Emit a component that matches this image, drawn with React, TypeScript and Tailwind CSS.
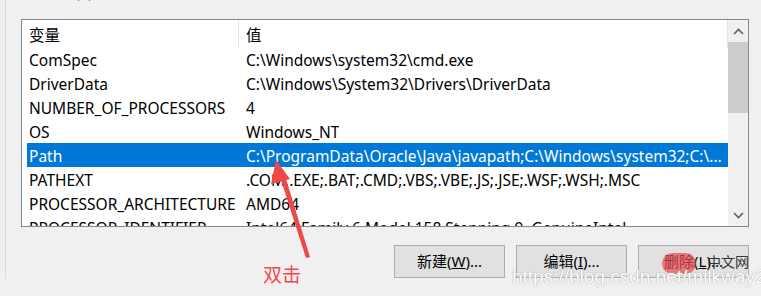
import React from "react";

const rows: [string, string][] = [
  ["ComSpec", "C:\\Windows\\system32\\cmd.exe"],
  ["DriverData", "C:\\Windows\\System32\\Drivers\\DriverData"],
  ["NUMBER_OF_PROCESSORS", "4"],
  ["OS", "Windows_NT"],
  ["Path", "C:\\ProgramData\\Oracle\\Java\\javapath;C:\\Windows\\system32;C:\\..."],
  ["PATHEXT", ".COM;.EXE;.BAT;.CMD;.VBS;.VBE;.JS;.JSE;.WSF;.WSH;.MSC"],
  ["PROCESSOR_ARCHITECTURE", "AMD64"],
  ["PROCESSOR_IDENTIFIER", "Intel64 Family 6 Model 158 Stepping 9, GenuineIntel"],
];

const font = "font-['Noto_Sans','Noto_Sans_CJK_SC',sans-serif]";

const Button: React.FC<{ label: string; hotkey: string }> = ({ label, hotkey }) => (
  <button className="w-[111px] h-[33px] bg-[#e1e1e1] border border-[#adadad] text-[15px] text-black">
    {label}(<span className="underline">{hotkey}</span>)...
  </button>
);

export default function App() {
  return (
    <div className={`relative w-[761px] h-[296px] bg-[#f0f0f0] overflow-hidden ${font}`}>
      <div className="ml-[5px] h-full border-l border-[#dadada] pl-[15px]">
        <div className="-mt-[17px] -ml-[8px] h-[36px] text-[15.5px] leading-[19px] text-black">系统变量(S)</div>

        {/* list view */}
        <div className="w-[728px] h-[208px] border border-[#828790] bg-white flex">
          <div className="flex-1 overflow-hidden">
            <div className="h-[27px] flex items-center text-[15.5px] text-black">
              <div className="w-[217px] h-full pl-[7px] pt-[4px] flex items-center border-r border-[#e5e5e5]">变量</div>
              <div className="pl-[7px] pt-[4px]">值</div>
              <div className="ml-auto h-full border-r border-[#e5e5e5]" />
            </div>
            {rows.map(([name, value]) => {
              const selected = name === "Path";
              return (
                <div
                  key={name}
                  className={`ml-[5px] h-[24px] pt-[3px] flex items-center whitespace-nowrap text-[15.5px] ${
                    selected ? "bg-[#0078d7] text-white" : "text-black"
                  }`}
                >
                  <div className="w-[219px] shrink-0 pl-[2px]">{name}</div>
                  <div className="overflow-hidden">{value}</div>
                </div>
              );
            })}
          </div>

          {/* scrollbar */}
          <div className="w-[20px] flex flex-col bg-[#f0f0f0]">
            <div className="h-[22px] flex items-center justify-center">
              <svg width="11" height="7" viewBox="0 0 11 7">
                <path d="M1 6 L5.5 1.5 L10 6" fill="none" stroke="#606060" strokeWidth="1.6" />
              </svg>
            </div>
            <div className="h-[71px] bg-[#cdcdcd]" />
            <div className="flex-1" />
            <div className="h-[22px] flex items-center justify-center">
              <svg width="11" height="7" viewBox="0 0 11 7">
                <path d="M1 1 L5.5 5.5 L10 1" fill="none" stroke="#606060" strokeWidth="1.6" />
              </svg>
            </div>
          </div>
        </div>

        <div className="mt-[18px] flex justify-end gap-[11px] w-[728px]">
          <Button label="新建" hotkey="W" />
          <Button label="编辑" hotkey="I" />
          <Button label="删除" hotkey="L" />
        </div>
      </div>

      {/* annotation */}
      <svg className="absolute inset-0 pointer-events-none" width="761" height="296">
        <path d="M306 258 L281 180 L286 179 L310 257 Z" fill="#f04848" />
        <path d="M276 160 L271 184 L290 179 Z" fill="#f04848" />
      </svg>
      <div className="absolute left-[263px] top-[263px] text-[19px] leading-[24px] text-[#f0474f]">双击</div>

      {/* watermark */}
      <div className="absolute left-[662px] top-[253px] w-[34px] h-[21px] rounded-full bg-[#e8484f]/70" />
      <div className="absolute left-[707px] top-[252px] text-[14px] leading-[20px] text-[#333]">中文网</div>
      <div className="absolute left-[512px] top-[265px] font-['Liberation_Sans',sans-serif] text-[19px] leading-[24px] text-white [text-shadow:0_0_1px_#a8a8a8,0_0_1px_#a8a8a8]">
        https://blog.csdn.net/milkway2013
      </div>
    </div>
  );
}
